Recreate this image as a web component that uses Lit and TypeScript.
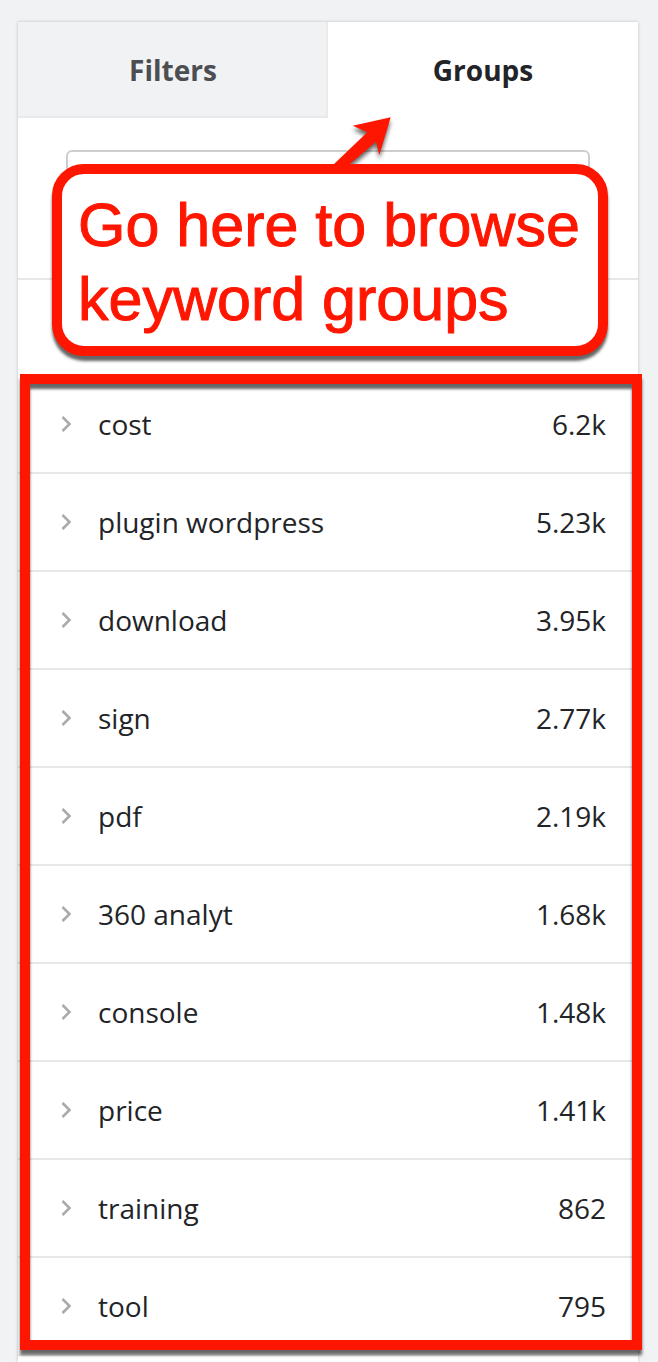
import { LitElement, html, css } from "lit";
import { customElement, state } from "lit/decorators.js";

interface Group {
  name: string;
  count: string;
}

const GROUPS: Group[] = [
  { name: "cost", count: "6.2k" },
  { name: "plugin wordpress", count: "5.23k" },
  { name: "download", count: "3.95k" },
  { name: "sign", count: "2.77k" },
  { name: "pdf", count: "2.19k" },
  { name: "360 analyt", count: "1.68k" },
  { name: "console", count: "1.48k" },
  { name: "price", count: "1.41k" },
  { name: "training", count: "862" },
  { name: "tool", count: "795" },
];

@customElement("group-list")
class GroupList extends LitElement {
  static styles = css`
    :host {
      display: block;
    }
    .list {
      margin: 0;
      padding: 0;
      list-style: none;
    }
    .item {
      border-bottom: 2px solid #e6e7e9;
    }
    .row {
      display: flex;
      align-items: center;
      gap: 24px;
      width: 100%;
      height: 96px;
      box-sizing: border-box;
      padding: 0 32px 0 40px;
      border: 0;
      background: none;
      color: #222427;
      font: 28px/40px "Open Sans", "Noto Sans", sans-serif;
      text-align: left;
      cursor: pointer;
    }
    .chevron {
      flex: none;
      width: 16px;
      height: 20px;
    }
    .name {
      flex: 1;
    }
  `;

  render() {
    return html`
      <ul class="list">
        ${GROUPS.map(
          (g) => html`
            <li class="item">
              <button class="row" type="button">
                <svg class="chevron" viewBox="0 0 16 20" aria-hidden="true">
                  <path d="M4.5 3 11.5 10 4.5 17" fill="none" stroke="#a9abad" stroke-width="2.6" />
                </svg>
                <span class="name">${g.name}</span>
                <span>${g.count}</span>
              </button>
            </li>
          `
        )}
      </ul>
    `;
  }
}

@customElement("app-root")
class AppRoot extends LitElement {
  @state() private tab = "groups";

  static styles = css`
    :host {
      display: flex;
      min-height: 100vh;
      box-sizing: border-box;
      padding: 22px 20px 0 18px;
      background: #f1f2f4;
      font-family: "Open Sans", "Noto Sans", sans-serif;
      overflow: hidden;
    }
    .panel {
      position: relative;
      flex: 1;
      min-width: 0;
      background: #fff;
      box-shadow: 0 0 3px rgba(0, 0, 0, 0.22);
    }
    .tabs {
      display: grid;
      grid-template-columns: 1fr 1fr;
    }
    .tab {
      height: 96px;
      padding: 0;
      border: 0;
      background: #f1f2f4;
      box-shadow: inset -2px -2px 0 #e9eaec;
      color: #4c4e51;
      font: 700 28px/40px "Open Sans", "Noto Sans", sans-serif;
      cursor: pointer;
    }
    .tab[aria-selected="true"] {
      background: #fff;
      box-shadow: none;
      color: #222427;
    }
    .search {
      padding: 32px 48px;
      border-bottom: 2px solid #e6e7e9;
    }
    .field {
      display: block;
      width: 100%;
      height: 96px;
      box-sizing: border-box;
      border: 2px solid #cccdce;
      border-radius: 6px;
      padding: 0 24px;
      background: #fff;
      font: 28px/40px "Open Sans", "Noto Sans", sans-serif;
    }
    .heading {
      height: 96px;
    }
    .results {
      position: relative;
    }
    .frame {
      position: absolute;
      inset: -2px -4px 6px 2px;
      border: 10px solid #ff1600;
      box-shadow: 0 5px 3px rgba(0, 0, 0, 0.6), inset 0 5px 3px rgba(0, 0, 0, 0.6);
      pointer-events: none;
    }
    .callout {
      position: absolute;
      top: 142px;
      left: 34px;
      right: 30px;
      margin: 0;
      padding: 14px 16px 10px;
      border: 10px solid #ff1600;
      border-radius: 32px;
      background: #fff;
      box-shadow: 0 5px 3px rgba(0, 0, 0, 0.6);
      color: #ff1600;
      font: 61px/74px "Liberation Sans", Arial, sans-serif;
      -webkit-text-stroke: 1px #ff1600;
    }
    .arrow {
      position: absolute;
      left: 50%;
      bottom: calc(100% + 10px);
      width: 72px;
      height: 52px;
    }
    .arrow-shape {
      fill: #ff1600;
      filter: drop-shadow(0 4px 2px rgba(0, 0, 0, 0.6));
    }
  `;

  private renderTab(id: string, label: string) {
    return html`
      <button
        class="tab"
        type="button"
        role="tab"
        aria-selected=${this.tab === id ? "true" : "false"}
        @click=${() => (this.tab = id)}
      >
        ${label}
      </button>
    `;
  }

  render() {
    return html`
      <main class="panel">
        <div class="tabs" role="tablist">
          ${this.renderTab("filters", "Filters")} ${this.renderTab("groups", "Groups")}
        </div>
        <div class="search">
          <input class="field" type="text" aria-label="Search groups" />
        </div>
        <div class="heading"></div>
        <div class="results">
          <group-list></group-list>
          <div class="frame"></div>
        </div>
        <p class="callout">
          Go here to browse keyword groups
          <svg class="arrow" viewBox="0 0 72 52" aria-hidden="true">
            <path
              class="arrow-shape"
              d="M60.7 5.3 22.7 13.7 37.3 20.3 2 54H17.5L46 29.7 49.3 43Z"
            />
          </svg>
        </p>
      </main>
    `;
  }
}
